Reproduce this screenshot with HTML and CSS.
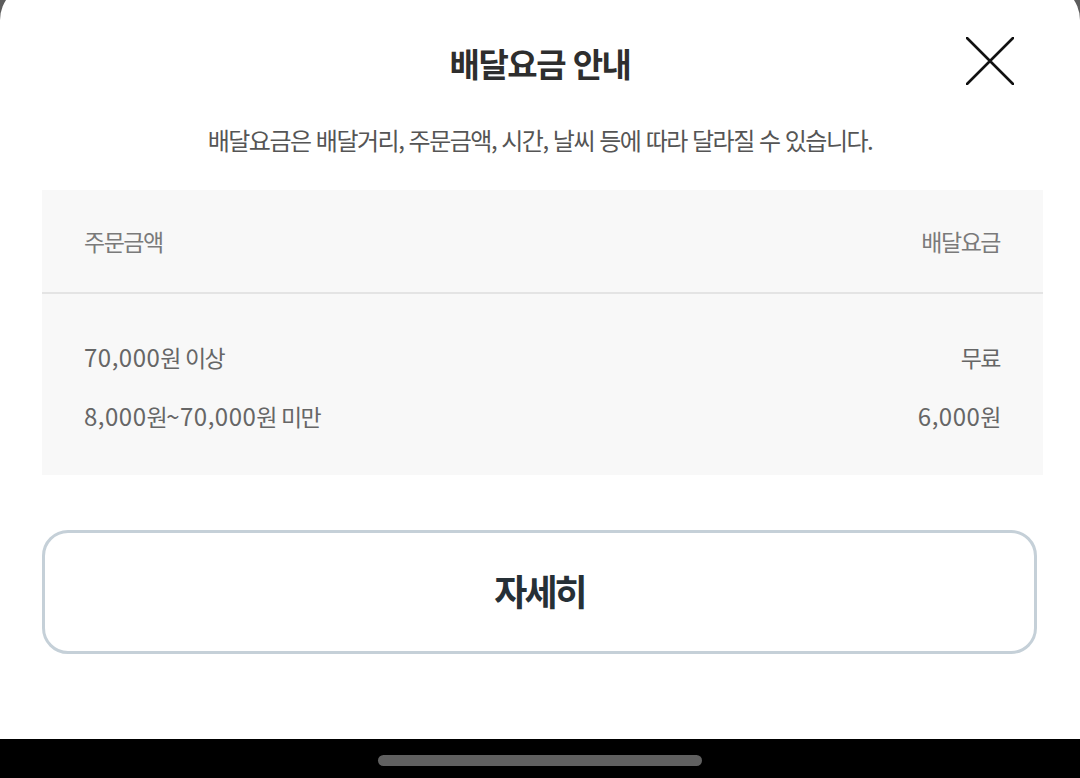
FILE: index.html
```html
<!DOCTYPE html>
<html lang="ko">
<head>
<meta charset="utf-8">
<title>배달요금 안내</title>
<link rel="stylesheet" href="styles.css">
</head>
<body>
<div class="sheet">
  <header class="sheet-header">
    <div class="spacer"></div>
    <h1 class="title">배달요금 안내</h1>
    <button class="close" aria-label="닫기">
      <svg width="48" height="48" viewBox="0 0 48 48"><path d="M1 1 L47 47 M47 1 L1 47" stroke="#111" stroke-width="2.6" stroke-linecap="round" fill="none"/></svg>
    </button>
  </header>
  <p class="subtitle">배달요금은 배달거리, 주문금액, 시간, 날씨 등에 따라 달라질 수 있습니다.</p>
  <div class="fee-table">
    <div class="fee-head">
      <span>주문금액</span>
      <span>배달요금</span>
    </div>
    <div class="fee-body">
      <div class="fee-row"><span><span class="num">70,000</span>원 이상</span><span>무료</span></div>
      <div class="fee-row"><span><span class="num">8,000</span>원<span class="num">~70,000</span>원 미만</span><span><span class="num">6,000</span>원</span></div>
    </div>
  </div>
  <button class="detail-btn">자세히</button>
</div>
<div class="navbar"><div class="pill"></div></div>
</body>
</html>
```
FILE: styles.css
```css
html, body {
  margin: 0;
  padding: 0;
}
body {
  width: 1080px;
  height: 778px;
  overflow: hidden;
  background: #5d5d5d;
  font-family: "Noto Sans CJK KR", "Noto Sans", sans-serif;
}
.sheet {
  margin-top: -16px;
  height: 755px;
  box-sizing: border-box;
  background: #fff;
  border-radius: 36px 36px 0 0;
  padding-top: 53px;
}
.sheet-header {
  display: grid;
  grid-template-columns: 1fr auto 1fr;
  align-items: center;
  height: 48px;
  padding: 0 66px;
}
.title {
  margin: 0;
  font-size: 33px;
  line-height: 48px;
  font-weight: 700;
  letter-spacing: -1.5px;
  color: #2e2e2e;
  position: relative;
  top: 2px;
}
.close {
  justify-self: end;
  width: 48px;
  height: 48px;
  padding: 0;
  border: 0;
  background: none;
  display: flex;
}
.subtitle {
  margin: 39px 0 0 0;
  text-align: center;
  font-size: 24px;
  line-height: 32px;
  letter-spacing: -1.5px;
  color: #555;
}
.fee-table {
  margin: 34px 0 0 42px;
  width: 1001px;
  background: #f8f8f8;
  color: #707070;
  font-size: 23px;
  letter-spacing: -1.5px;
}
.num {
  font-size: 24px;
  letter-spacing: 0.5px;
}
.fee-head {
  height: 104px;
  box-sizing: border-box;
  display: flex;
  justify-content: space-between;
  align-items: center;
  padding: 0 43px 0 42px;
  border-bottom: 2px solid #e4e4e4;
  color: #7a7a7a;
}
.fee-body {
  padding: 47px 43px 43px 42px;
  display: flex;
  flex-direction: column;
  gap: 27px;
  color: #666;
}
.fee-row {
  display: flex;
  justify-content: space-between;
  height: 32px;
  line-height: 32px;
}
.detail-btn {
  display: block;
  margin: 55px 0 0 42px;
  width: 995px;
  height: 124px;
  border: 3px solid #c5d0d8;
  border-radius: 26px;
  background: #fff;
  font-family: "Noto Sans CJK KR", "Noto Sans", sans-serif;
  font-size: 36px;
  font-weight: 700;
  letter-spacing: -3px;
  color: #263036;
  padding: 0 0 4px 0;
}
.navbar {
  height: 39px;
  background: #000;
  display: flex;
  justify-content: center;
  align-items: center;
}
.pill {
  width: 324px;
  height: 11px;
  border-radius: 6px;
  background: #606060;
  margin-top: 3px;
}
```
